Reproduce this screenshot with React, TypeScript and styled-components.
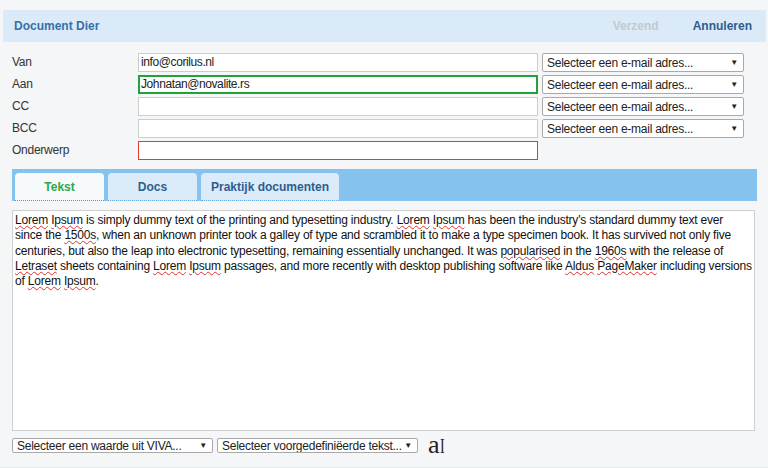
import React from "react";
import styled, { createGlobalStyle } from "styled-components";

const Global = createGlobalStyle`
  html, body { margin: 0; padding: 0; background: #f4f6f8; }
  body { font-family: "Liberation Sans", Arial, sans-serif; font-size: 12px; color: #222; letter-spacing: -0.25px; }
`;

const Page = styled.div`
  width: 768px;
  height: 468px;
  box-sizing: border-box;
  padding-top: 10px;
  border-bottom: 1px solid #e2ebf0;
  overflow: hidden;
`;

const Header = styled.div`
  margin: 0 2px 0 3px;
  height: 32px;
  background: #dbeaf8;
  display: flex;
  align-items: center;
  padding: 0 14px 0 11px;
  font-weight: bold;
  font-size: 12px;
  letter-spacing: 0;
`;

const Title = styled.div`
  color: #3470aa;
  flex: 1;
`;

const HeaderAction = styled.div<{ $disabled?: boolean }>`
  color: ${(p) => (p.$disabled ? "#c4c9cf" : "#2d5d8f")};
  margin-left: 34px;
`;

const Form = styled.div`
  display: grid;
  grid-template-columns: 122px 400px 202px;
  column-gap: 4px;
  row-gap: 3px;
  padding: 11px 0 0 12px;
  align-items: center;
`;

const Label = styled.div`
  color: #333;
  font-size: 12px;
  line-height: 19px;
  margin-top: -1px;
`;

const Input = styled.div<{ $state?: "ok" | "error" }>`
  height: 19px;
  box-sizing: border-box;
  background: #fff;
  border: 1px solid
    ${(p) => (p.$state === "ok" ? "#1fa33a" : p.$state === "error" ? "#e53935" : "#cdcdcd")};
  ${(p) => (p.$state === "ok" ? "border-width: 2px;" : "")}
  padding: 0 ${(p) => (p.$state === "ok" ? "1px" : "2px")};
  font-size: 12px;
  letter-spacing: -0.4px;
  line-height: ${(p) => (p.$state === "ok" ? "15px" : "17px")};
  color: #222;
`;

const Select = styled.div<{ $w?: number; $h?: number }>`
  width: ${(p) => p.$w ?? 202}px;
  height: ${(p) => p.$h ?? 19}px;
  box-sizing: border-box;
  background: #fff;
  border: 1px solid #a9a9a9;
  border-radius: 2px;
  display: flex;
  align-items: center;
  padding: 0 5px 0 4px;
  font-size: 12px;
  color: #222;
  white-space: nowrap;
  overflow: hidden;
`;

const SelectText = styled.span`
  flex: 1;
`;

const Arrow = styled.span`
  font-size: 8px;
  color: #222;
`;

const TabBar = styled.div`
  margin: 9px 11px 0 12px;
  height: 32px;
  box-sizing: border-box;
  background: #85c2ee;
  padding: 4px 0 0 3px;
  display: flex;
  align-items: flex-end;
  gap: 4px;
`;

const Tab = styled.div<{ $active?: boolean; $w: number }>`
  width: ${(p) => p.$w}px;
  height: 28px;
  box-sizing: border-box;
  border-radius: 4px 4px 0 0;
  background: ${(p) => (p.$active ? "#f7fafd" : "#dcebf9")};
  border-bottom: 1px dotted ${(p) => (p.$active ? "#3db55a" : "#6aa6da")};
  color: ${(p) => (p.$active ? "#2ba84a" : "#2d5d8f")};
  font-weight: bold;
  font-size: 12px;
  letter-spacing: 0;
  display: flex;
  align-items: center;
  justify-content: center;
  padding-top: 1px;
`;

const Editor = styled.div`
  margin: 9px 13px 0 12px;
  height: 221px;
  box-sizing: border-box;
  background: #fff;
  border: 1px solid #cfcfcf;
  padding: 2px 2px;
  font-size: 12px;
  letter-spacing: -0.2px;
  line-height: 15.3px;
  color: #111;
  white-space: nowrap;
`;

const Miss = styled.span`
  text-decoration: underline wavy #e03030;
  text-decoration-thickness: 1px;
  text-underline-offset: 1px;
`;

const Footer = styled.div`
  display: flex;
  align-items: center;
  gap: 4px;
  padding: 6px 0 0 12px;
`;

const FontIcon = styled.span`
  font-family: "Liberation Serif", "Times New Roman", serif;
  font-size: 26px;
  line-height: 15px;
  letter-spacing: 0;
  color: #222;
  margin-left: 6px;
  display: flex;
  align-items: baseline;
`;

const Caret = styled.span`
  font-size: 20px;
  display: inline-block;
  transform: scaleX(0.7);
  margin-left: -1px;
`;

const emailSelect = "Selecteer een e-mail adres...";

export default function App() {
  return (
    <>
      <Global />
      <Page>
        <Header>
          <Title>Document Dier</Title>
          <HeaderAction $disabled>Verzend</HeaderAction>
          <HeaderAction>Annuleren</HeaderAction>
        </Header>
        <Form>
          <Label>Van</Label>
          <Input>info@corilus.nl</Input>
          <Select>
            <SelectText>{emailSelect}</SelectText>
            <Arrow>▼</Arrow>
          </Select>
          <Label>Aan</Label>
          <Input $state="ok">Johnatan@novalite.rs</Input>
          <Select>
            <SelectText>{emailSelect}</SelectText>
            <Arrow>▼</Arrow>
          </Select>
          <Label>CC</Label>
          <Input />
          <Select>
            <SelectText>{emailSelect}</SelectText>
            <Arrow>▼</Arrow>
          </Select>
          <Label>BCC</Label>
          <Input />
          <Select>
            <SelectText>{emailSelect}</SelectText>
            <Arrow>▼</Arrow>
          </Select>
          <Label>Onderwerp</Label>
          <Input $state="error" />
          <div />
        </Form>
        <TabBar>
          <Tab $active $w={89}>Tekst</Tab>
          <Tab $w={89}>Docs</Tab>
          <Tab $w={138}>Praktijk documenten</Tab>
        </TabBar>
        <Editor>
          <Miss>Lorem</Miss> <Miss>Ipsum</Miss> is simply dummy text of the printing and typesetting industry.{" "}
          <Miss>Lorem</Miss> <Miss>Ipsum</Miss> has been the industry's standard dummy text ever
          <br />
          since the <Miss>1500s</Miss>, when an unknown printer took a galley of type and scrambled it to make
          a type specimen book. It has survived not only five
          <br />
          centuries, but also the leap into electronic typesetting, remaining essentially unchanged. It was{" "}
          <Miss>popularised</Miss> in the <Miss>1960s</Miss> with the release of
          <br />
          <Miss>Letraset</Miss> sheets containing <Miss>Lorem</Miss> <Miss>Ipsum</Miss> passages, and more
          recently with desktop publishing software like <Miss>Aldus</Miss> <Miss>PageMaker</Miss> including
          versions
          <br />
          of <Miss>Lorem</Miss> <Miss>Ipsum</Miss>.
        </Editor>
        <Footer>
          <Select $w={201} $h={15}>
            <SelectText>Selecteer een waarde uit VIVA...</SelectText>
            <Arrow>▼</Arrow>
          </Select>
          <Select $w={201} $h={15}>
            <SelectText>Selecteer voorgedefiniëerde tekst...</SelectText>
            <Arrow>▼</Arrow>
          </Select>
          <FontIcon>
            a<Caret>I</Caret>
          </FontIcon>
        </Footer>
      </Page>
    </>
  );
}
